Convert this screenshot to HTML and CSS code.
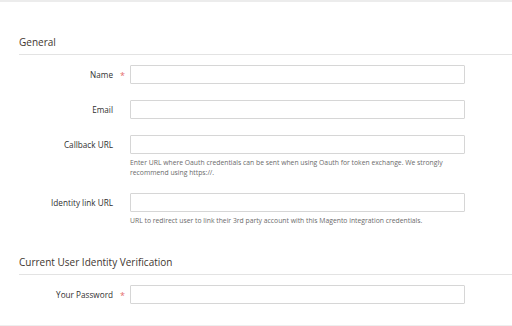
FILE: index.html
```html
<!DOCTYPE html>
<html lang="en">

<head>
    <meta charset="UTF-8">
    <title>New Integration</title>
    <link rel="stylesheet" href="styles.css">
</head>

<body>
    <div class="page">
        <!-- General section -->
        <fieldset class="section">
            <div class="section-title">General</div>

            <div class="field">
                <label class="label required" for="name">Name</label>
                <div class="control">
                    <input type="text" id="name" class="input">
                </div>
            </div>

            <div class="field">
                <label class="label" for="email">Email</label>
                <div class="control">
                    <input type="text" id="email" class="input">
                </div>
            </div>

            <div class="field">
                <label class="label" for="endpoint">Callback URL</label>
                <div class="control">
                    <input type="text" id="endpoint" class="input">
                    <div class="note">Enter URL where Oauth credentials can be sent when using Oauth for token exchange. We strongly recommend using https://.</div>
                </div>
            </div>

            <div class="field">
                <label class="label" for="identity">Identity link URL</label>
                <div class="control">
                    <input type="text" id="identity" class="input">
                    <div class="note">URL to redirect user to link their 3rd party account with this Magento integration credentials.</div>
                </div>
            </div>
        </fieldset>

        <!-- Password verification -->
        <fieldset class="section section-last">
            <div class="section-title">Current User Identity Verification</div>

            <div class="field">
                <label class="label required" for="password">Your Password</label>
                <div class="control">
                    <input type="password" id="password" class="input">
                </div>
            </div>
        </fieldset>
    </div>
</body>

</html>
```

FILE: styles.css
```css
body {
    margin: 0;
    font-family: 'Open Sans', Arial, sans-serif;
    background-color: #fff;
    color: #303030;
}

.page {
    border-top: 2px solid #ececec;
    border-bottom: 1px solid #eeeeee;
    padding-left: 19px;
    height: 326px;
    box-sizing: border-box;
}

.section {
    border: 0;
    margin: 0;
    padding: 0;
    min-width: 0;
}

.section-title {
    font-size: 10px;
    color: #41362f;
    padding-top: 34px;
    padding-bottom: 5px;
    line-height: 13px;
    border-bottom: 1px solid #e3e3e3;
    margin-bottom: 10px;
}

.section-last .section-title {
    padding-top: 15px;
}

.field {
    display: flex;
    align-items: flex-start;
    margin-bottom: 16px;
}

.label {
    width: 111px;
    text-align: right;
    font-size: 8.2px;
    line-height: 19px;
    padding-right: 17px;
    box-sizing: border-box;
    flex-shrink: 0;
    position: relative;
}

.label.required::after {
    content: "*";
    color: #eb5202;
    color: #e46b6b;
    font-size: 9px;
    position: absolute;
    right: 5px;
    top: 1px;
}

.control {
    width: 335px;
}

.input {
    display: block;
    width: 335px;
    height: 19px;
    margin: 0;
    box-sizing: border-box;
    border: 1px solid #d6d6d6;
    border-radius: 1px;
    background: #fff;
    outline: none;
}

.note {
    font-size: 6.8px;
    line-height: 10px;
    color: #6b6b6b;
    padding-top: 4px;
    margin-bottom: -1px;
}
```
